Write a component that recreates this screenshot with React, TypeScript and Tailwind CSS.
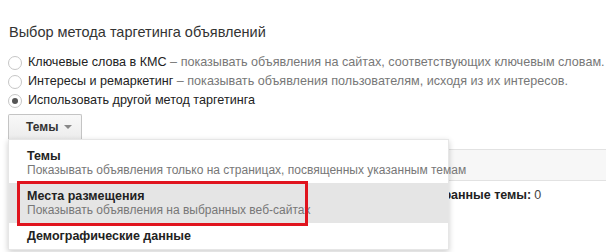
const options = [
    {
        label: 'Ключевые слова в КМС',
        hint: ' – показывать объявления на сайтах, соответствующих ключевым словам.',
        checked: false,
    },
    {
        label: 'Интересы и ремаркетинг',
        hint: ' – показывать объявления пользователям, исходя из их интересов.',
        checked: false,
    },
    { label: 'Использовать другой метод таргетинга', hint: '', checked: true },
];

const menu = [
    {
        title: 'Темы',
        text: 'Показывать объявления только на страницах, посвященных указанным темам',
        active: false,
    },
    {
        title: 'Места размещения',
        text: 'Показывать объявления на выбранных веб-сайтах',
        active: true,
    },
    { title: 'Демографические данные', text: '', active: false },
];

export default function App() {
    return (
        <main className="relative h-[252px] w-[606px] overflow-hidden bg-white font-['Liberation_Sans',Arial,sans-serif] text-[12px] text-[#222]">
            <h1 className="pt-[22px] pl-[9px] text-[14.5px] leading-[20px] text-[#333]">
                Выбор метода таргетинга объявлений
            </h1>

            <div className="mt-[11px] flex flex-col">
                {options.map((o) => (
                    <label
                        key={o.label}
                        className="flex h-[19px] items-center gap-[6px] pl-[8px]"
                    >
                        <span className="grid h-[14px] w-[14px] flex-none place-items-center rounded-full border border-[#c6c6c6] bg-white">
                            {o.checked && (
                                <span className="h-[6px] w-[6px] rounded-full bg-[#555]" />
                            )}
                        </span>
                        <span className="whitespace-nowrap text-[12.6px]">
                            {o.label}
                            <span className="text-[#777]">{o.hint}</span>
                        </span>
                    </label>
                ))}
            </div>

            <button className="mt-[4px] ml-[8px] flex h-[25px] w-[74px] items-center gap-[6px] rounded-t-[2px] border border-b-0 border-[#c4c4c4] bg-gradient-to-b from-[#f8f8f8] to-[#ececec] pl-[17px] text-[12px] font-bold text-[#333]">
                Темы
                <span className="h-0 w-0 border-x-[4px] border-t-[4px] border-x-transparent border-t-[#888]" />
            </button>

            <section className="mt-[10px] ml-[8px]">
                <div className="h-[32px] border-y border-[#e2e2e2] bg-[#f7f7f7]" />
                <div className="flex h-[28px] items-center pl-[408px] text-[12.5px] whitespace-nowrap">
                    <b>Выбранные темы:</b>
                    <span className="ml-[3px] text-[#444]">0</span>
                </div>
            </section>

            <ul className="absolute top-[139px] left-[8px] w-[441px] border border-[#e6e6e6] bg-white pt-[3px] shadow-[0_2px_6px_rgba(0,0,0,0.2)]">
                {menu.map((m) => (
                    <li
                        key={m.title}
                        className={
                            m.active
                                ? 'relative bg-[#e5e5e5] px-[18px] py-[6px]'
                                : 'px-[18px] py-[6px]'
                        }
                    >
                        <div className="text-[12.5px] leading-[14px] font-bold text-[#222]">
                            {m.title}
                        </div>
                        {m.text && (
                            <div className="text-[12px] leading-[14px] whitespace-nowrap text-[#777]">
                                {m.text}
                            </div>
                        )}
                        {m.active && (
                            <span className="absolute -top-[2px] -bottom-[3px] left-[8px] w-[291px] border-[3px] border-[#e0141e]" />
                        )}
                    </li>
                ))}
            </ul>
        </main>
    );
}
